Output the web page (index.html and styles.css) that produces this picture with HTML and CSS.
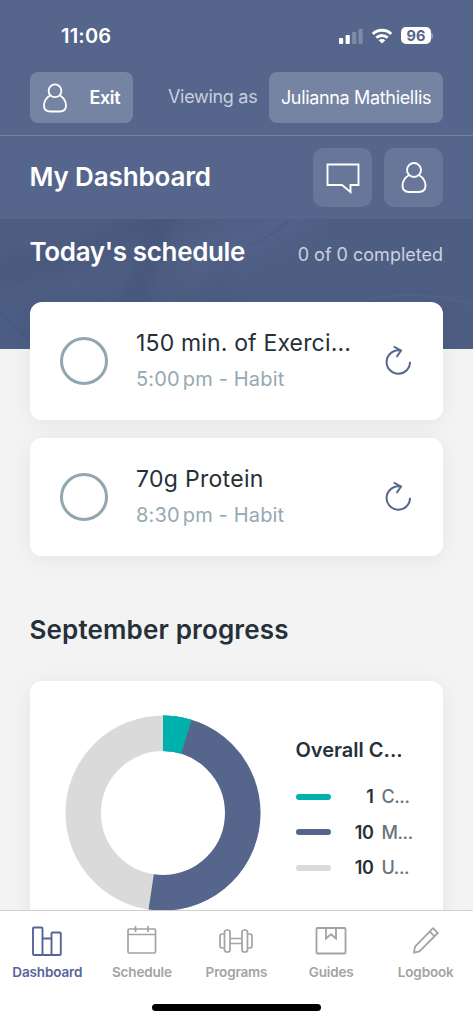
FILE: index.html
```html
<!DOCTYPE html>
<html lang="en">
<head>
<meta charset="utf-8">
<title>My Dashboard</title>
<link rel="stylesheet" href="styles.css">
</head>
<body>
<div class="app">
  <header class="header">
    <div class="status">
      <span class="time">11:06</span>
      <div class="status-icons">
        <svg class="signal" width="24" height="16" viewBox="0 0 24 16" fill="#fff"><rect x="0" y="10" width="4.2" height="6" rx="1"/><rect x="6.6" y="7" width="4.2" height="9" rx="1"/><rect x="13.1" y="4" width="4.2" height="12" rx="1" opacity=".25"/><rect x="19.5" y="0.8" width="4.2" height="15.2" rx="1" opacity=".25"/></svg>
        <svg class="wifi" width="22" height="16" viewBox="0 0 22 16" fill="none" stroke="#fff" stroke-width="2.9"><path d="M1.800 6a13.200 13.200 0 0 1 18.400 0M5.300 9.800a8.200 8.200 0 0 1 11.400 0"/><path d="M11 15.600 7.600 12.300a4.900 4.900 0 0 1 6.800 0z" fill="#fff" stroke="none"/></svg>
        <span class="battery">96</span><span class="battery-tip"></span>
      </div>
    </div>
    <div class="viewing">
      <button class="pill exit">
        <svg width="26" height="30" viewBox="0 0 26 30" fill="none" stroke="#fff" stroke-width="1.8"><circle cx="13" cy="7.800" r="6.400"/><path d="M8.400 12.200C4.500 14.500 2 18.500 2 22.500c0 3.900 2.400 6 6.500 6h9c4.100 0 6.500-2.100 6.500-6 0-4-2.500-8-6.400-10.300"/></svg>
        <span>Exit</span>
      </button>
      <span class="viewing-label">Viewing as</span>
      <button class="pill client">Julianna Mathiellis</button>
    </div>
    <div class="title-row">
      <h1>My Dashboard</h1>
      <div class="actions">
        <button class="square"><svg width="34" height="32" viewBox="0 0 34 32" fill="none" stroke="#fff" stroke-width="1.900"><path d="M1.500 2.500h31v20.500h-8v7l-8.500-7H1.500z"/></svg></button>
        <button class="square"><svg width="26" height="32" viewBox="0 0 26 32" fill="none" stroke="#fff" stroke-width="1.900"><circle cx="13" cy="8" r="7"/><path d="M8.200 13C4.200 15.400 1.500 19.400 1.500 23.600c0 4.100 2.500 6.400 6.700 6.400h9.600c4.200 0 6.700-2.300 6.700-6.400 0-4.200-2.700-8.200-6.700-10.600"/></svg></button>
      </div>
    </div>
  </header>

  <section class="hero">
    <svg class="folds" viewBox="0 0 473 130" preserveAspectRatio="none">
      <defs><filter id="soft" x="-20%" y="-50%" width="140%" height="200%"><feGaussianBlur stdDeviation="10"/></filter></defs>
      <g filter="url(#soft)" fill="none">
        <path d="M-10 52 Q70 45 110 20T190-10" stroke="#46567b" stroke-width="20"/>
        <path d="M165 0 L145 50 L118 130" stroke="#455579" stroke-width="17"/>
        <path d="M-10 112 Q70 100 160 105" stroke="#4b5c84" stroke-width="34"/>
        <path d="M225 40 Q205 85 225 140" stroke="#495a80" stroke-width="16"/>
        <path d="M190 40 Q260 20 310-10" stroke="#52628a" stroke-width="24"/>
      </g>
      <g fill="none" stroke="#43547b" stroke-width="2" opacity=".3"><path d="M250 26 Q272 18 290 1"/><path d="M0 92 L28 120"/><path d="M360 82 Q420 68 473 86" stroke="#5a6c94"/></g>
    </svg>
    <h2>Today's schedule</h2>
    <span class="completed">0 of 0 completed</span>
  </section>

  <main class="content">
    <div class="cards">
      <article class="card task">
        <span class="check"></span>
        <div class="task-text"><div class="task-name first">150 min. of Exerci...</div><div class="task-meta"><span>5:00</span><span>pm - Habit</span></div></div>
        <svg class="repeat" width="28" height="32" viewBox="0 0 28 32" fill="none" stroke="#55658e" stroke-width="2"><path d="M26 16.700A11.700 11.700 0 1 1 17 5.600"/><path d="M9.700 1.500 17 5.600 12.600 12"/></svg>
      </article>
      <article class="card task">
        <span class="check"></span>
        <div class="task-text"><div class="task-name">70g Protein</div><div class="task-meta"><span>8:30</span><span>pm - Habit</span></div></div>
        <svg class="repeat" width="28" height="32" viewBox="0 0 28 32" fill="none" stroke="#55658e" stroke-width="2"><path d="M26 16.700A11.700 11.700 0 1 1 17 5.600"/><path d="M9.700 1.500 17 5.600 12.600 12"/></svg>
      </article>
    </div>
    <h2 class="progress-title">September progress</h2>
    <article class="card progress">
      <svg class="donut" width="196" height="196" viewBox="-98 -98 196 196" fill="none" stroke-width="35.500">
        <g transform="rotate(-90)">
          <circle r="79.750" stroke="#dadada"/>
          <circle r="79.750" stroke="#55658c" pathLength="21" stroke-dasharray="11 10"/>
          <circle r="79.750" stroke="#00b0ac" pathLength="21" stroke-dasharray="1 20"/>
        </g>
      </svg>
      <div class="legend">
        <h3>Overall C...</h3>
        <div class="legend-row"><i class="bar teal"></i><b>1</b><span>C...</span></div>
        <div class="legend-row"><i class="bar blue"></i><b>10</b><span>M...</span></div>
        <div class="legend-row"><i class="bar gray"></i><b>10</b><span>U...</span></div>
      </div>
    </article>
  </main>

  <footer class="footer">
    <nav class="tabs">
      <a class="tab active"><svg width="34" height="32" viewBox="0 0 34 32" fill="none" stroke="currentColor" stroke-width="1.900" stroke-linejoin="round"><rect x="3" y="1.500" width="9.500" height="27.500" rx="1"/><rect x="21.500" y="6.500" width="9.300" height="22.500" rx="1"/><path d="M12.500 12.500h9M12.500 29h9"/></svg><span>Dashboard</span></a>
      <a class="tab"><svg width="34" height="32" viewBox="0 0 34 32" fill="none" stroke="currentColor" stroke-width="1.700"><rect x="3" y="3" width="27.500" height="24" rx="1.200"/><path d="M3 8.500h27.500M10.500 0v6M23 0v6"/></svg><span>Schedule</span></a>
      <a class="tab"><svg width="36" height="32" viewBox="0 0 36 32" fill="none" stroke="currentColor" stroke-width="1.700"><rect x="6.500" y="4" width="5.500" height="22" rx="2.300"/><rect x="24" y="4" width="5.500" height="22" rx="2.300"/><path d="M6.500 8H4.200Q2 8 2 10.200v9.600Q2 22 4.200 22h2.300M29.500 8h2.300Q34 8 34 10.200v9.600Q34 22 31.800 22h-2.300M12 12.500h12M12 17.500h12"/></svg><span>Programs</span></a>
      <a class="tab"><svg width="34" height="32" viewBox="0 0 34 32" fill="none" stroke="currentColor" stroke-width="1.800"><rect x="2.500" y="2" width="29" height="25.500" rx="1"/><path d="M12 2v10.500l5-4.300 5 4.300V2"/></svg><span>Guides</span></a>
      <a class="tab"><svg width="34" height="32" viewBox="0 0 34 32" fill="none" stroke="currentColor" stroke-width="1.800" stroke-linejoin="round"><path d="M24 2.200 28.800 7 10.500 25.300 5 26.700 6 20.600zM20.700 5.600l5 4.700"/></svg><span>Logbook</span></a>
    </nav>
    <div class="home"></div>
  </footer>
</div>
</body>
</html>
```
FILE: styles.css
```css
* { box-sizing: border-box; }
body { margin: 0; font-family: Inter, "Liberation Sans", sans-serif; background: #f3f3f3; }
h1, h2, h3 { margin: 0; font-weight: 600; }
button { border: 0; padding: 0; font: inherit; color: #fff; }
svg { display: block; flex: none; }
.app { width: 473px; height: 1024px; overflow: hidden; display: flex; flex-direction: column; color: #263038; white-space: nowrap; }
.header { height: 219px; flex: none; background: #55658c; color: #fff; }
.status { height: 72px; padding: 0 40px 0 61px; display: flex; align-items: center; justify-content: space-between; }
.time { font-size: 20px; font-weight: 600; letter-spacing: .2px; }
.status-icons { display: flex; align-items: center; padding-bottom: 1px; }
.wifi { margin-left: 8px; }
.battery { margin-left: 8px; width: 30px; height: 17px; border-radius: 5px; background: #fff; color: #55658c; font-size: 14.500px; font-weight: 700; line-height: 17px; text-align: center; }
.battery-tip { width: 2px; height: 6px; margin-left: 0; border-radius: 0 2px 2px 0; background: #919cb5; }
.viewing { height: 64px; padding: 0 30px 12px 29.500px; display: flex; align-items: flex-start; border-bottom: 1px solid #7684a4; }
.pill { height: 51px; border-radius: 8px; background: #7684a4; display: flex; align-items: center; }
.exit { width: 103.500px; padding-left: 12px; gap: 22px; font-size: 18px; font-weight: 600; letter-spacing: -.4px; }
.viewing-label { margin-left: 35px; width: 101px; line-height: 50px; font-size: 18px; letter-spacing: -.3px; color: #c8cfdd; }
.client { width: 174px; justify-content: center; font-size: 18px; letter-spacing: -.33px; }
.title-row { height: 83px; padding: 0 30px 0 29.500px; display: flex; align-items: center; justify-content: space-between; }
h1 { font-size: 26px; letter-spacing: -.15px; padding-bottom: 2px; }
.actions { display: flex; gap: 12px; }
.square { width: 59px; height: 59px; border-radius: 10px; background: #687699; display: flex; align-items: center; justify-content: center; }
.hero { position: relative; height: 130px; flex: none; padding: 17px 30px 0 29.500px; background: #4e5e83; color: #fff; display: flex; justify-content: space-between; align-items: flex-start; overflow: hidden; }
.folds { position: absolute; inset: 0; width: 100%; height: 100%; }
.hero h2 { position: relative; font-size: 26px; line-height: 32px; letter-spacing: -.35px; }
.completed { position: relative; margin-top: 3px; font-size: 18px; line-height: 32px; color: #ccd2df; }
.content { flex: 1; min-height: 0; padding: 0 30px 0 29.500px; margin-top: -47px; }
.cards { position: relative; display: grid; gap: 18px; }
.card { background: #fff; border-radius: 12px; box-shadow: 0 3px 22px rgba(0,0,0,.06); }
.task { height: 118px; display: flex; align-items: center; padding: 0 31px 0 30.500px; }
.check { width: 48px; height: 48px; border: 3px solid #91a6ae; border-radius: 50%; flex: none; }
.task-text { margin-left: 28px; width: 218px; }
.task-name { font-size: 23px; line-height: 36px; letter-spacing: .3px; }
.first { letter-spacing: .16px; }
.task-meta { display: flex; gap: 3px; font-size: 20px; line-height: 36px; letter-spacing: .16px; color: #94a9b3; }
.repeat { margin-left: auto; }
.progress-title { margin-top: 57px; font-size: 26px; line-height: 34px; letter-spacing: .15px; }
.progress { position: relative; margin-top: 34px; height: 260px; padding: 34px 0 0 35px; display: flex; }
.legend { margin-left: 35px; width: 125px; padding-top: 21px; }
h3 { font-size: 20px; line-height: 28px; }
.legend-row { display: flex; align-items: center; height: 35.500px; font-size: 18px; font-weight: 500; letter-spacing: -.4px; color: #66757e; }
h3 + .legend-row { margin-top: 15px; }
.legend-row b { width: 43px; text-align: right; color: #263038; font-weight: 600; }
.legend-row span { margin-left: 8px; }
.bar { width: 35px; height: 6px; border-radius: 3px; }
.teal { background: #00b0ac; }
.blue { background: #55658c; }
.gray { background: #dadada; }
.footer { position: relative; height: 114px; flex: none; background: #fff; border-top: 1px solid #cfcfcf; }
.tabs { display: grid; grid-template-columns: repeat(5, 1fr); padding-top: 15px; }
.tab { display: flex; flex-direction: column; align-items: center; gap: 4px; font-size: 13.500px; font-weight: 600; letter-spacing: -.15px; line-height: 21px; color: #a3a3a3; }
.active { color: #55659a; }
.home { width: 169px; height: 7px; margin: 21px auto 0; border-radius: 4px; background: #000; }
```
